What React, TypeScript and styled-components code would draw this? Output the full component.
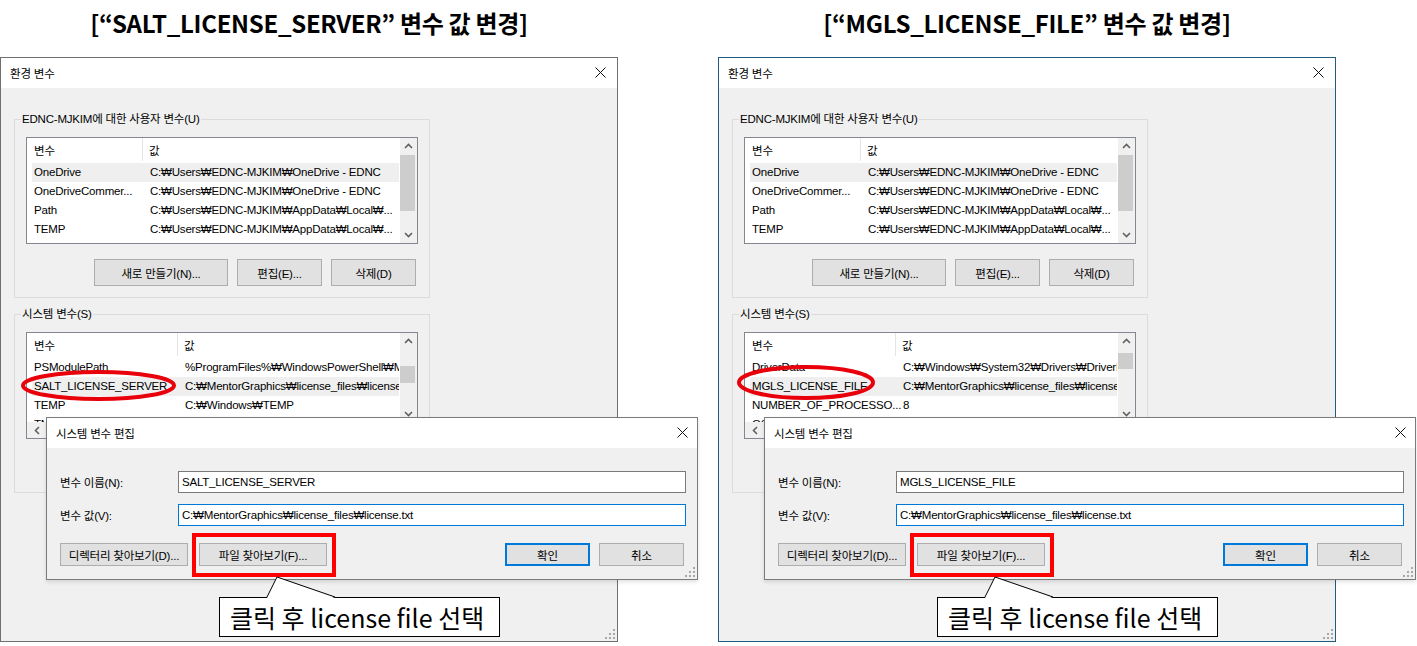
import React from 'react';
import styled, { createGlobalStyle } from 'styled-components';

const UI_FONT = `"Liberation Sans", "Noto Sans CJK KR", sans-serif`;
const KR_FONT = `"Noto Sans CJK KR", "Noto Sans", sans-serif`;

interface Row {
  name: string;
  value: string;
  selected?: boolean;
}

interface Variant {
  heading: string;
  frame: string;
  sysRows: Row[];
  sysThumb: [number, number];
  editName: string;
  editValue: string;
  ring: { left: number; top: number; rx: number; ry: number };
}

const userRows: Row[] = [
  { name: 'OneDrive', value: 'C:₩Users₩EDNC-MJKIM₩OneDrive - EDNC', selected: true },
  { name: 'OneDriveCommer...', value: 'C:₩Users₩EDNC-MJKIM₩OneDrive - EDNC' },
  { name: 'Path', value: 'C:₩Users₩EDNC-MJKIM₩AppData₩Local₩...' },
  { name: 'TEMP', value: 'C:₩Users₩EDNC-MJKIM₩AppData₩Local₩...' },
];

const variants: Variant[] = [
  {
    heading: '[“SALT_LICENSE_SERVER” 변수 값 변경]',
    frame: '#707070',
    sysRows: [
      { name: 'PSModulePath', value: '%ProgramFiles%₩WindowsPowerShell₩Modules' },
      { name: 'SALT_LICENSE_SERVER', value: 'C:₩MentorGraphics₩license_files₩license.txt', selected: true },
      { name: 'TEMP', value: 'C:₩Windows₩TEMP' },
      { name: 'TMP', value: 'C:₩Windows₩TEMP' },
    ],
    sysThumb: [16, 17],
    editName: 'SALT_LICENSE_SERVER',
    editValue: 'C:₩MentorGraphics₩license_files₩license.txt',
    ring: { left: 19, top: 368, rx: 75.5, ry: 13.5 },
  },
  {
    heading: '[“MGLS_LICENSE_FILE” 변수 값 변경]',
    frame: '#1e5a82',
    sysRows: [
      { name: 'DriverData', value: 'C:₩Windows₩System32₩Drivers₩DriverData' },
      { name: 'MGLS_LICENSE_FILE', value: 'C:₩MentorGraphics₩license_files₩license.txt', selected: true },
      { name: 'NUMBER_OF_PROCESSO...', value: '8' },
      { name: 'OS', value: 'Windows_NT' },
    ],
    sysThumb: [3, 16],
    editName: 'MGLS_LICENSE_FILE',
    editValue: 'C:₩MentorGraphics₩license_files₩license.txt',
    ring: { left: 17, top: 363, rx: 67, ry: 15.5 },
  },
];

const Chevron: React.FC<{ dir: 'up' | 'down' | 'left' }> = ({ dir }) => {
  const pts = dir === 'up' ? '1,6 4.5,2.5 8,6' : dir === 'down' ? '1,3 4.5,6.5 8,3' : '6,1 2.5,4.5 6,8';
  return (
    <svg width="9" height="9" viewBox="0 0 9 9">
      <polyline points={pts} fill="none" stroke="#606060" strokeWidth="1.6" />
    </svg>
  );
};

const CloseIcon = () => (
  <svg width="11" height="11" viewBox="0 0 11 11">
    <path d="M0.5 0.5 L10.5 10.5 M10.5 0.5 L0.5 10.5" stroke="#111" strokeWidth="1" />
  </svg>
);

const GripIcon = () => (
  <svg width="10" height="10" viewBox="0 0 10 10">
    {[[8, 0], [4, 4], [8, 4], [0, 8], [4, 8], [8, 8]].map(([x, y]) => (
      <rect key={`${x}-${y}`} x={x} y={y} width="2" height="2" fill="#a8a8a8" />
    ))}
  </svg>
);

const ListView: React.FC<{ rows: Row[]; col: number; hscroll?: boolean; thumb: [number, number] }> = ({ rows, col, hscroll, thumb }) => (
  <ListBox $hscroll={hscroll}>
    <ListContent>
      <HeaderRow $col={col}>
        <HeaderCell>변수</HeaderCell>
        <HeaderCell>값</HeaderCell>
      </HeaderRow>
      {rows.map(r => (
        <ItemRow key={r.name} $col={col} $selected={r.selected}>
          <NameCell>{r.name}</NameCell>
          <ValueCell>{r.value}</ValueCell>
        </ItemRow>
      ))}
    </ListContent>
    <VScroll>
      <ArrowBox><Chevron dir="up" /></ArrowBox>
      <Track>
        <Thumb style={{ marginTop: thumb[0], height: thumb[1] }} />
      </Track>
      <ArrowBox><Chevron dir="down" /></ArrowBox>
    </VScroll>
    {hscroll && (
      <>
        <HScroll>
          <ArrowBox><Chevron dir="left" /></ArrowBox>
        </HScroll>
        <Corner />
      </>
    )}
  </ListBox>
);

const Panel: React.FC<{ v: Variant }> = ({ v }) => (
  <PanelWrap>
    <Heading>{v.heading}</Heading>
    <MainDialog $frame={v.frame}>
      <TitleBar $pad={11}>
        <span>환경 변수</span>
        <CloseIcon />
      </TitleBar>
      <DialogBody>
        <Group>
          <Legend>EDNC-MJKIM에 대한 사용자 변수(U)</Legend>
          <GroupInner>
            <ListView rows={userRows} col={118} thumb={[0, 56]} />
            <ButtonRow>
              <Button $w={134}>새로 만들기(N)...</Button>
              <Button $w={85}>편집(E)...</Button>
              <Button $w={85}>삭제(D)</Button>
            </ButtonRow>
          </GroupInner>
        </Group>
        <Group $gapTop={8}>
          <Legend>시스템 변수(S)</Legend>
          <GroupInner>
            <ListView rows={v.sysRows} col={153} hscroll thumb={v.sysThumb} />
            <ButtonRow>
              <Button $w={134}>새로 만들기(W)...</Button>
              <Button $w={85}>편집(I)...</Button>
              <Button $w={85}>삭제(L)</Button>
            </ButtonRow>
          </GroupInner>
        </Group>
      </DialogBody>
      <Grip><GripIcon /></Grip>
    </MainDialog>

    <Ring
      style={{ left: v.ring.left, top: v.ring.top }}
      width={v.ring.rx * 2 + 8}
      height={v.ring.ry * 2 + 8}
    >
      <ellipse
        cx={v.ring.rx + 4}
        cy={v.ring.ry + 4}
        rx={v.ring.rx}
        ry={v.ring.ry}
        fill="none"
        stroke="#e8000b"
        strokeWidth="4"
      />
    </Ring>

    <EditDialog>
      <TitleBar $pad={9}>
        <span>시스템 변수 편집</span>
        <CloseIcon />
      </TitleBar>
      <EditBody>
        <FieldGrid>
          <FieldLabel>변수 이름(N):</FieldLabel>
          <TextField readOnly value={v.editName} />
          <FieldLabel>변수 값(V):</FieldLabel>
          <TextField readOnly value={v.editValue} $focused />
        </FieldGrid>
        <EditButtons>
          <ButtonGroup $gap={11}>
            <Button $w={128} $h={23}>디렉터리 찾아보기(D)...</Button>
            <Button $w={128} $h={23}>파일 찾아보기(F)...</Button>
          </ButtonGroup>
          <ButtonGroup $gap={9}>
            <Button $w={85} $h={23} $primary>확인</Button>
            <Button $w={85} $h={23}>취소</Button>
          </ButtonGroup>
        </EditButtons>
      </EditBody>
      <Grip><GripIcon /></Grip>
    </EditDialog>

    <Highlight />

    <Pointer width="80" height="24" viewBox="0 0 80 24">
      <polygon points="7,23 17,2 75,23" fill="#fff" />
      <polyline points="7,22 17,2 75,22" fill="none" stroke="#000" strokeWidth="1" />
    </Pointer>
    <Callout>클릭 후 license file 선택</Callout>
  </PanelWrap>
);

export default function App() {
  return (
    <>
      <GlobalStyle />
      <Page>
        {variants.map(v => (
          <Panel key={v.heading} v={v} />
        ))}
      </Page>
    </>
  );
}

const GlobalStyle = createGlobalStyle`
  body {
    margin: 0;
    background: #fff;
    font-family: ${UI_FONT};
  }
  * {
    box-sizing: border-box;
  }
`;

const Page = styled.div`
  display: flex;
  width: 1417px;
  height: 646px;
  overflow: hidden;
  background: #fff;
`;

const PanelWrap = styled.div`
  position: relative;
  width: 718px;
  flex-shrink: 0;
  display: flex;
  flex-direction: column;
`;

const Heading = styled.div`
  width: 618px;
  height: 57px;
  padding-bottom: 13px;
  display: flex;
  align-items: center;
  justify-content: center;
  font-family: ${KR_FONT};
  font-weight: 700;
  font-size: 24px;
  letter-spacing: -0.3px;
  color: #000;
`;

const MainDialog = styled.div<{ $frame: string }>`
  position: relative;
  width: 618px;
  height: 585px;
  border: 1px solid ${p => p.$frame};
  background: #f0f0f0;
  display: flex;
  flex-direction: column;
  font-size: 11.5px;
  letter-spacing: -0.2px;
  color: #000;
`;

const TitleBar = styled.div<{ $pad: number }>`
  height: 30px;
  flex-shrink: 0;
  background: #fff;
  display: flex;
  align-items: center;
  justify-content: space-between;
  padding: 0 ${p => p.$pad}px 1px 9px;
  font-family: ${UI_FONT};
  font-size: 11.5px;
`;

const DialogBody = styled.div`
  flex: 1;
  padding: 23px 0 0 13px;
  display: flex;
  flex-direction: column;
`;

const Group = styled.fieldset<{ $gapTop?: number }>`
  width: 416px;
  margin: ${p => p.$gapTop ?? 0}px 0 0 0;
  padding: 0;
  min-width: 0;
  border: 1px solid #dcdcdc;
`;

const Legend = styled.legend`
  margin-left: 6px;
  padding: 0 1px;
  line-height: 16px;
  font-size: 11.5px;
`;

const GroupInner = styled.div`
  padding: 10px 11px 11px 11px;
  display: flex;
  flex-direction: column;
  gap: 15px;
`;

const ListBox = styled.div<{ $hscroll?: boolean }>`
  height: 107px;
  border: 1px solid #828790;
  background: #fff;
  display: grid;
  grid-template-columns: 1fr 17px;
  grid-template-rows: ${p => (p.$hscroll ? '1fr 16px' : '1fr')};
  overflow: hidden;
`;

const ListContent = styled.div`
  overflow: hidden;
  padding: 0 1px 0 5px;
  min-width: 0;
`;

const HeaderRow = styled.div<{ $col: number }>`
  display: grid;
  grid-template-columns: ${p => p.$col - 7}px 1fr;
  height: 25px;
  padding-bottom: 2px;
`;

const HeaderCell = styled.div`
  display: flex;
  align-items: center;
  padding-left: 2px;
  &:first-child {
    border-right: 1px solid #e5e5e5;
  }
  &:last-child {
    padding-left: 6px;
  }
`;

const ItemRow = styled.div<{ $col: number; $selected?: boolean }>`
  display: grid;
  grid-template-columns: ${p => p.$col}px 1fr;
  height: 19px;
  padding-bottom: 2px;
  align-items: center;
  background: ${p => (p.$selected ? '#efefef' : 'transparent')};
  white-space: nowrap;
`;

const NameCell = styled.div`
  padding: 0 1px 0 2px;
  overflow: hidden;
`;

const ValueCell = styled.div`
  overflow: hidden;
`;

const VScroll = styled.div`
  background: #f0f0f0;
  display: flex;
  flex-direction: column;
`;

const ArrowBox = styled.div`
  width: 17px;
  height: 17px;
  flex-shrink: 0;
  display: flex;
  align-items: center;
  justify-content: center;
`;

const Track = styled.div`
  flex: 1;
  padding: 0 2px 0 0;
`;

const Thumb = styled.div`
  background: #cdcdcd;
  width: 15px;
`;

const HScroll = styled.div`
  background: #f0f0f0;
  display: flex;
  align-items: center;
  padding-left: 2px;
`;

const Corner = styled.div`
  background: #f0f0f0;
`;

const ButtonRow = styled.div`
  display: flex;
  justify-content: flex-end;
  gap: 9px;
  padding-right: 2px;
`;

const Button = styled.button<{ $w: number; $h?: number; $primary?: boolean }>`
  width: ${p => p.$w}px;
  height: ${p => p.$h ?? 27}px;
  padding: 0;
  background: #e1e1e1;
  border: ${p => (p.$primary ? '2px solid #0078d7' : '1px solid #adadad')};
  font-family: ${UI_FONT};
  font-size: 11.5px;
  letter-spacing: -0.2px;
  color: #000;
  white-space: nowrap;
`;

const Grip = styled.div`
  position: absolute;
  right: 2px;
  bottom: 2px;
  line-height: 0;
`;

const EditDialog = styled.div`
  position: absolute;
  left: 46px;
  top: 417px;
  width: 652px;
  height: 163px;
  border: 1px solid #7a7a7a;
  background: #f0f0f0;
  display: flex;
  flex-direction: column;
  font-size: 11.5px;
  letter-spacing: -0.2px;
  box-shadow: 0 2px 4px rgba(0, 0, 0, 0.12);
`;

const EditBody = styled.div`
  flex: 1;
  padding: 23px 11px 13px 13px;
  display: flex;
  flex-direction: column;
`;

const FieldGrid = styled.div`
  display: grid;
  grid-template-columns: 118px 1fr;
  row-gap: 11px;
  align-items: center;
`;

const FieldLabel = styled.div`
  font-size: 11.5px;
`;

const TextField = styled.input<{ $focused?: boolean }>`
  height: 22px;
  border: 1px solid ${p => (p.$focused ? '#0078d7' : '#7a7a7a')};
  background: #fff;
  padding: 0 3px;
  font-family: ${UI_FONT};
  font-size: 11.5px;
  letter-spacing: -0.2px;
  color: #000;
  outline: none;
`;

const EditButtons = styled.div`
  margin-top: 17px;
  display: flex;
  justify-content: space-between;
  padding-right: 2px;
`;

const ButtonGroup = styled.div<{ $gap: number }>`
  display: flex;
  gap: ${p => p.$gap}px;
`;

const Ring = styled.svg`
  position: absolute;
  overflow: visible;
`;

const Highlight = styled.div`
  position: absolute;
  left: 192px;
  top: 533px;
  width: 144px;
  height: 44px;
  border: 4px solid #ff0000;
`;

const Pointer = styled.svg`
  position: absolute;
  left: 260px;
  top: 575px;
  z-index: 2;
`;

const Callout = styled.div`
  position: absolute;
  left: 219px;
  top: 597px;
  width: 281px;
  height: 40px;
  border: 1px solid #000;
  background: #fff;
  display: flex;
  align-items: center;
  padding-left: 10px;
  font-family: ${KR_FONT};
  font-size: 25px;
  color: #000;
  white-space: nowrap;
`;
